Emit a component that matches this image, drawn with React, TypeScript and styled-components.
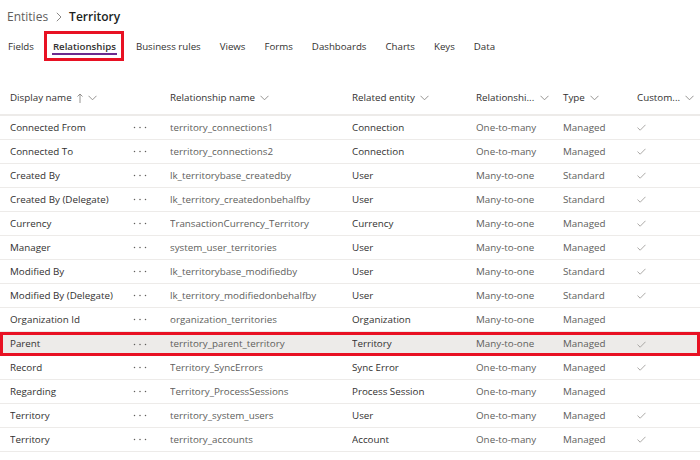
import React from "react";
import styled, { createGlobalStyle, css } from "styled-components";

const GlobalStyle = createGlobalStyle`
  html, body { margin: 0; padding: 0; background: #ffffff; }
  body { font-family: "Open Sans", "Noto Sans", sans-serif; color: #323130; }
`;

const Page = styled.div`
  width: 700px;
  height: 460px;
  overflow: hidden;
  background: #ffffff;
`;

const Breadcrumb = styled.div`
  display: flex;
  align-items: center;
  box-sizing: border-box;
  height: 31px;
  padding: 2px 0 0 7px;
  font-size: 12px;
`;

const Crumb = styled.span<{ $current?: boolean }>`
  color: ${(p) => (p.$current ? "#201f1e" : "#605e5c")};
  font-weight: ${(p) => (p.$current ? 600 : 400)};
  line-height: 16px;
`;

const CrumbSep = styled.span`
  display: flex;
  align-items: center;
  margin: 0 7px 0 8px;
`;

const Tabs = styled.nav`
  display: flex;
  align-items: stretch;
  gap: 19px;
  height: 30px;
  padding-left: 8px;
`;

const Tab = styled.div<{ $marked?: boolean }>`
  display: flex;
  align-items: center;
  font-size: 9.7px;
  color: #323130;
  ${(p) =>
    p.$marked &&
    css`
      margin: 0 -7px 0 -9px;
      padding: 0 7px 0 8px;
      box-shadow: inset 0 0 0 3px #e81123;
    `}
`;

const TabLabel = styled.span<{ $active?: boolean }>`
  line-height: 13px;
  padding-top: 2px;
  border-bottom: 2px solid ${(p) => (p.$active ? "#6b2b8f" : "transparent")};
  font-weight: ${(p) => (p.$active ? 600 : 400)};
  padding-left: ${(p) => (p.$active ? "1px" : "0")};
  padding-right: ${(p) => (p.$active ? "1px" : "0")};
`;

const Table = styled.div`
  margin-top: 20px;
`;

const gridCols = css`
  display: grid;
  grid-template-columns: 123px 37px 182px 124px 87px 74px 1fr;
  padding-left: 10px;
  align-items: center;
`;

const HeaderRow = styled.div`
  ${gridCols};
  height: 33px;
  border-bottom: 2px solid #edebe9;
  font-size: 9.8px;
  color: #323130;
`;

const HeadCell = styled.div<{ $span?: number; $right?: boolean }>`
  display: flex;
  align-items: center;
  gap: 5px;
  min-width: 0;
  white-space: nowrap;
  ${(p) => p.$span && css`grid-column: span ${p.$span};`}
  ${(p) =>
    p.$right &&
    css`
      justify-content: space-between;
      padding-right: 14px;
    `}
`;

const Row = styled.div<{ $marked?: boolean }>`
  ${gridCols};
  height: 23px;
  border-bottom: 1px solid #edebe9;
  font-size: 9.8px;
  ${(p) =>
    p.$marked &&
    css`
      background: #edebe9;
      height: 24px;
      border-bottom: none;
      box-shadow: inset 0 0 0 3px #e81123;
    `}
`;

const Cell = styled.div<{ $muted?: boolean }>`
  color: ${(p) => (p.$muted ? "#605e5c" : "#323130")};
  white-space: nowrap;
  overflow: hidden;
  line-height: 14px;
  display: flex;
  align-items: center;
`;

const Chevron = () => (
  <svg width="9" height="6" viewBox="0 0 9 6">
    <polyline points="0.5,0.8 4.5,4.8 8.5,0.8" fill="none" stroke="#8a8886" strokeWidth="0.9" />
  </svg>
);

const UpArrow = () => (
  <svg width="6" height="10" viewBox="0 0 6 10">
    <line x1="3" y1="1" x2="3" y2="10" stroke="#8a8886" strokeWidth="0.9" />
    <polyline points="0.5,3.5 3,1 5.5,3.5" fill="none" stroke="#8a8886" strokeWidth="0.9" />
  </svg>
);

const CrumbChevron = () => (
  <svg width="6" height="10" viewBox="0 0 6 10">
    <polyline points="0.8,0.8 5,5 0.8,9.2" fill="none" stroke="#8a8886" strokeWidth="1" />
  </svg>
);

const Check = () => (
  <svg width="9" height="7" viewBox="0 0 9 7">
    <polyline points="0.5,3.6 3.2,6.2 8.5,0.8" fill="none" stroke="#a19f9d" strokeWidth="0.9" />
  </svg>
);

const More = () => (
  <svg width="14" height="3" viewBox="0 0 14 3">
    <circle cx="1.5" cy="1.5" r="0.75" fill="#605e5c" />
    <circle cx="7" cy="1.5" r="0.75" fill="#605e5c" />
    <circle cx="12.5" cy="1.5" r="0.75" fill="#605e5c" />
  </svg>
);

type Rel = {
  display: string;
  name: string;
  entity: string;
  relType: string;
  type: string;
  custom: boolean;
  marked?: boolean;
};

const rows: Rel[] = [
  { display: "Connected From", name: "territory_connections1", entity: "Connection", relType: "One-to-many", type: "Managed", custom: true },
  { display: "Connected To", name: "territory_connections2", entity: "Connection", relType: "One-to-many", type: "Managed", custom: true },
  { display: "Created By", name: "lk_territorybase_createdby", entity: "User", relType: "Many-to-one", type: "Standard", custom: true },
  { display: "Created By (Delegate)", name: "lk_territory_createdonbehalfby", entity: "User", relType: "Many-to-one", type: "Standard", custom: true },
  { display: "Currency", name: "TransactionCurrency_Territory", entity: "Currency", relType: "Many-to-one", type: "Managed", custom: true },
  { display: "Manager", name: "system_user_territories", entity: "User", relType: "Many-to-one", type: "Managed", custom: true },
  { display: "Modified By", name: "lk_territorybase_modifiedby", entity: "User", relType: "Many-to-one", type: "Standard", custom: true },
  { display: "Modified By (Delegate)", name: "lk_territory_modifiedonbehalfby", entity: "User", relType: "Many-to-one", type: "Standard", custom: true },
  { display: "Organization Id", name: "organization_territories", entity: "Organization", relType: "Many-to-one", type: "Managed", custom: false },
  { display: "Parent", name: "territory_parent_territory", entity: "Territory", relType: "Many-to-one", type: "Managed", custom: true, marked: true },
  { display: "Record", name: "Territory_SyncErrors", entity: "Sync Error", relType: "One-to-many", type: "Managed", custom: true },
  { display: "Regarding", name: "Territory_ProcessSessions", entity: "Process Session", relType: "One-to-many", type: "Managed", custom: false },
  { display: "Territory", name: "territory_system_users", entity: "User", relType: "One-to-many", type: "Managed", custom: true },
  { display: "Territory", name: "territory_accounts", entity: "Account", relType: "One-to-many", type: "Managed", custom: true },
];

const tabs = ["Fields", "Relationships", "Business rules", "Views", "Forms", "Dashboards", "Charts", "Keys", "Data"];

export default function App() {
  return (
    <Page>
      <GlobalStyle />
      <Breadcrumb>
        <Crumb>Entities</Crumb>
        <CrumbSep>
          <CrumbChevron />
        </CrumbSep>
        <Crumb $current>Territory</Crumb>
      </Breadcrumb>
      <Tabs>
        {tabs.map((t) => (
          <Tab key={t} $marked={t === "Relationships"}>
            <TabLabel $active={t === "Relationships"}>{t}</TabLabel>
          </Tab>
        ))}
      </Tabs>
      <Table>
        <HeaderRow>
          <HeadCell $span={2}>
            <span>Display name</span>
            <UpArrow />
            <Chevron />
          </HeadCell>
          <HeadCell>
            <span>Relationship name</span>
            <Chevron />
          </HeadCell>
          <HeadCell>
            <span>Related entity</span>
            <Chevron />
          </HeadCell>
          <HeadCell $right>
            <span>Relationshi...</span>
            <Chevron />
          </HeadCell>
          <HeadCell>
            <span>Type</span>
            <Chevron />
          </HeadCell>
          <HeadCell>
            <span>Custom...</span>
            <Chevron />
          </HeadCell>
        </HeaderRow>
        {rows.map((r, i) => (
          <Row key={i} $marked={r.marked}>
            <Cell>{r.display}</Cell>
            <Cell>
              <More />
            </Cell>
            <Cell $muted>{r.name}</Cell>
            <Cell>{r.entity}</Cell>
            <Cell $muted>{r.relType}</Cell>
            <Cell $muted>{r.type}</Cell>
            <Cell>{r.custom && <Check />}</Cell>
          </Row>
        ))}
      </Table>
    </Page>
  );
}
